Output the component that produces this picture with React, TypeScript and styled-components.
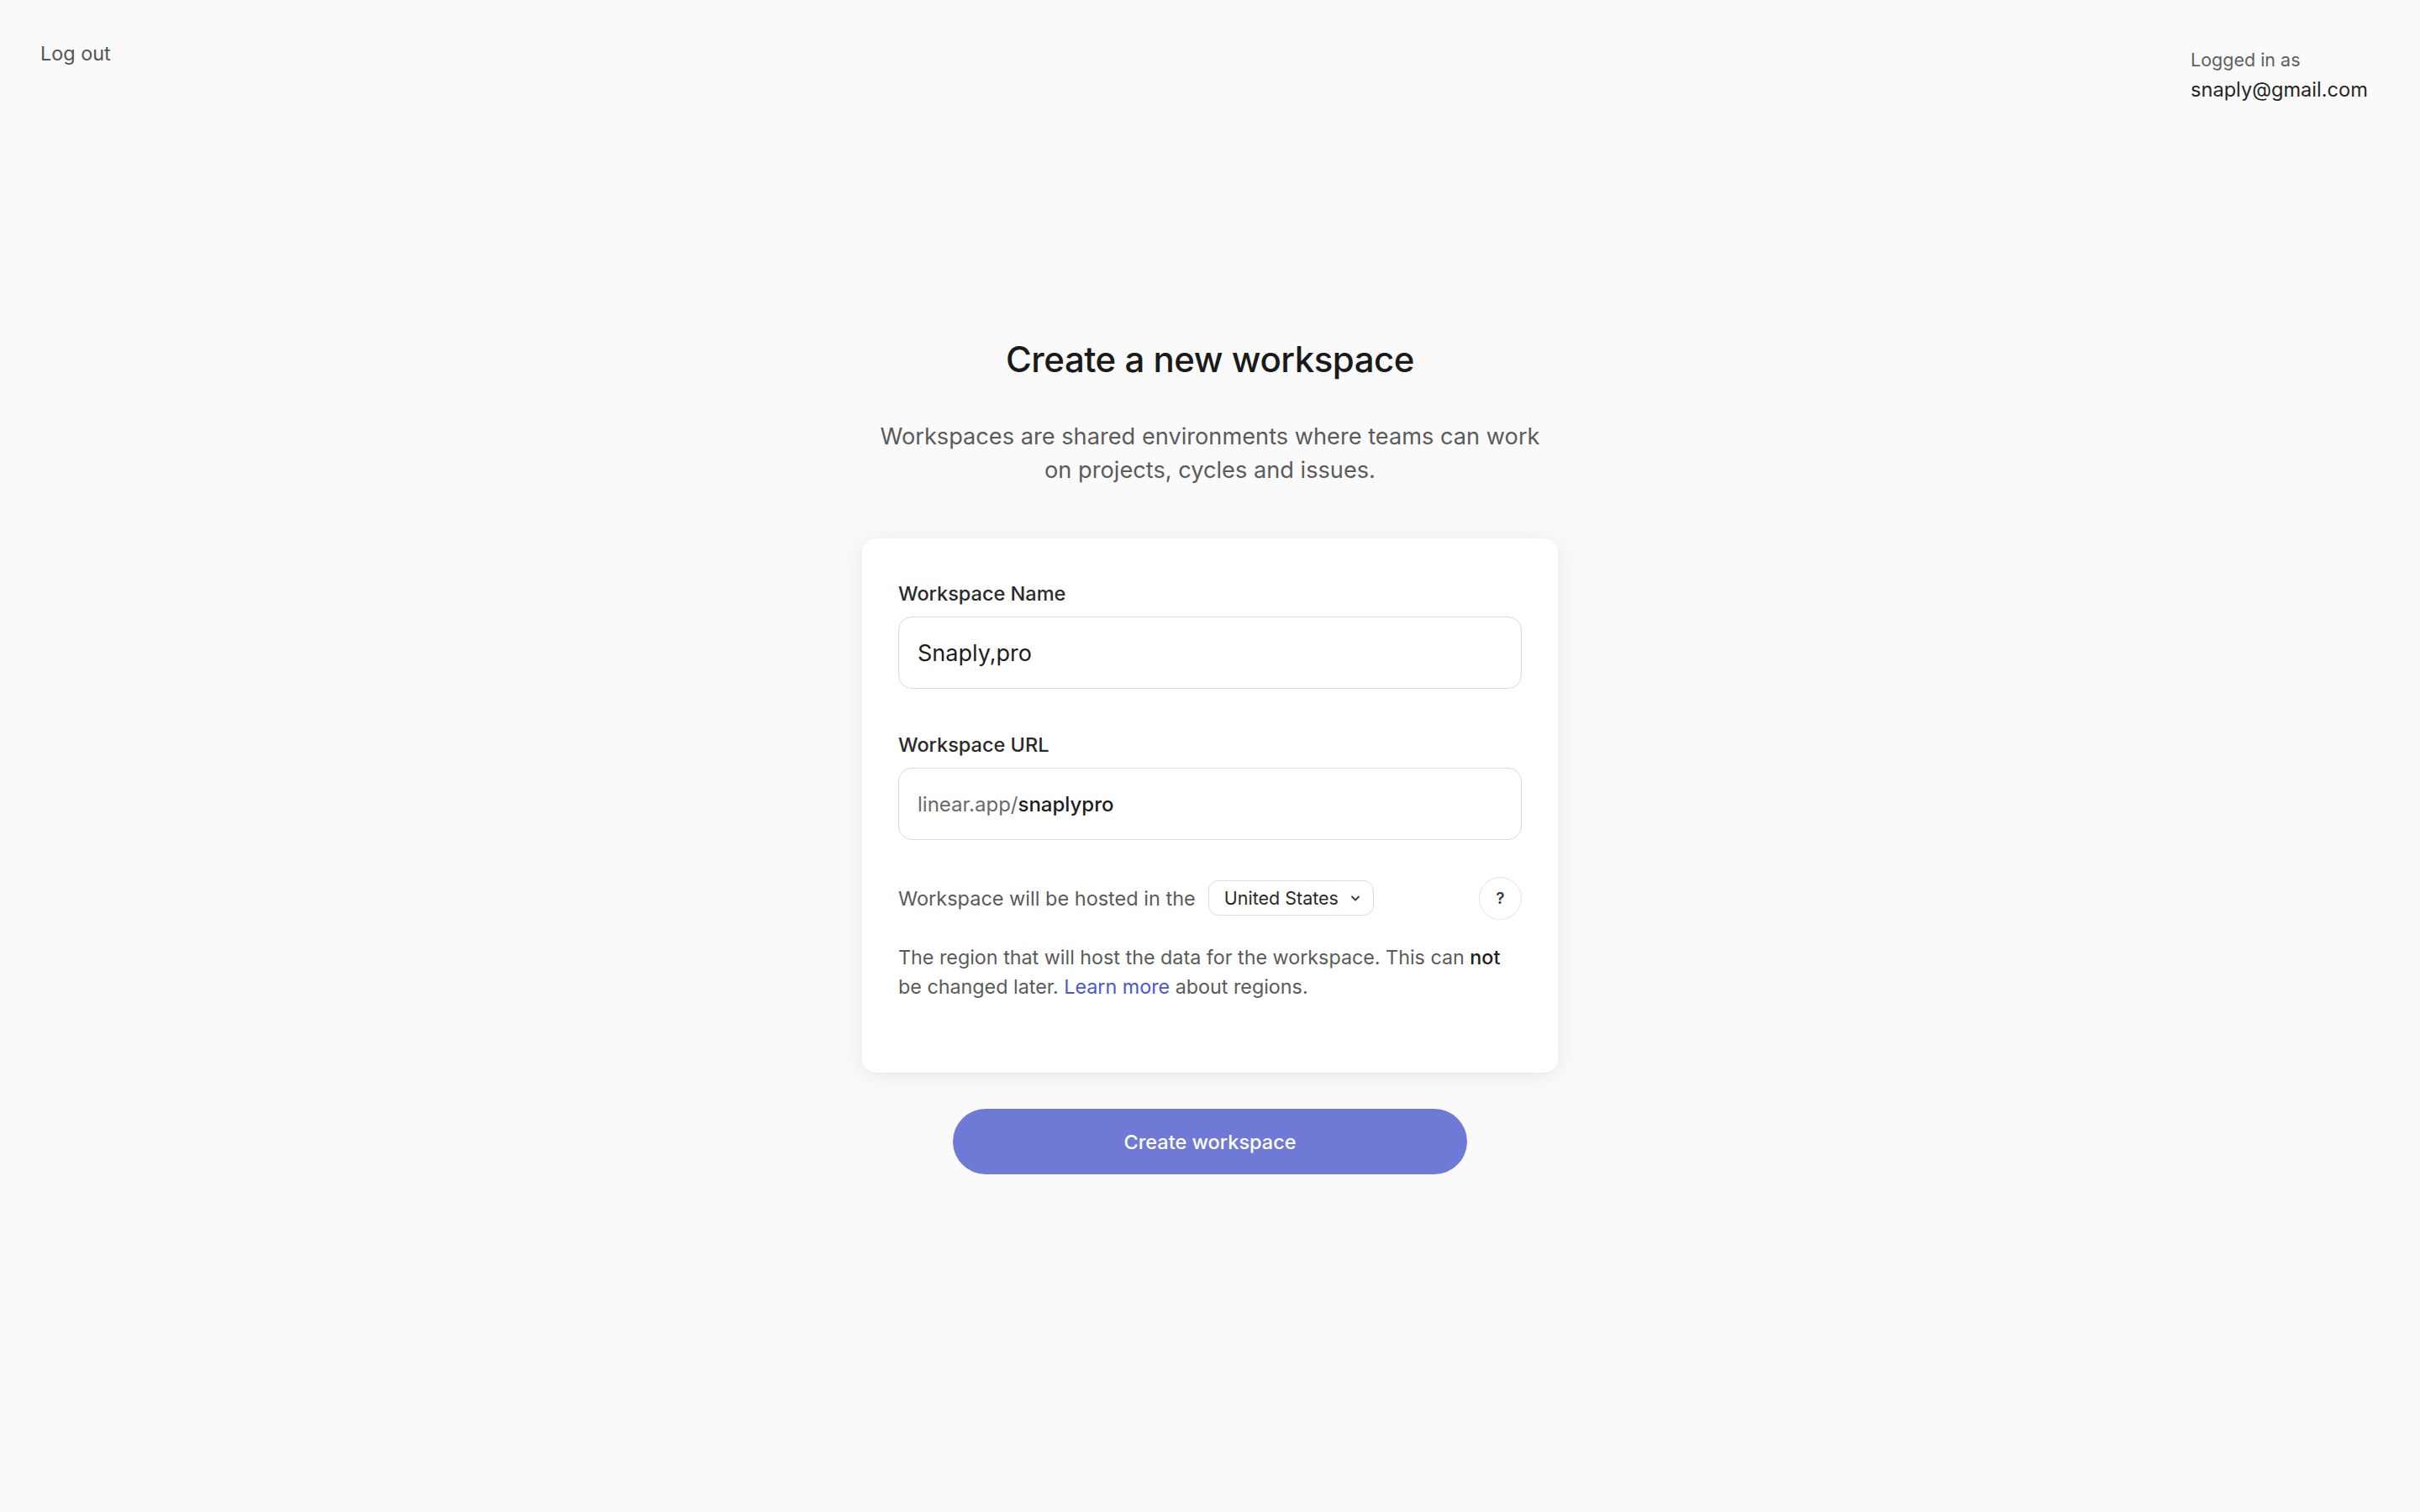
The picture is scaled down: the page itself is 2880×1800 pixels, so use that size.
import React from 'react';
import styled, { createGlobalStyle } from 'styled-components';

const GlobalStyle = createGlobalStyle`
  html, body {
    margin: 0;
    padding: 0;
    background: #fafafa;
    font-family: Inter, "Liberation Sans", sans-serif;
    -webkit-font-smoothing: antialiased;
  }
  * { box-sizing: border-box; }
`;

const Page = styled.div`
  min-height: 1800px;
  background: #fafafa;
  display: flex;
  flex-direction: column;
`;

const TopBar = styled.header`
  display: flex;
  justify-content: space-between;
  align-items: flex-start;
  padding: 46px 62px 0 48px;
`;

const LogOut = styled.a`
  font-size: 23.4px;
  line-height: 36px;
  color: #555;
  cursor: pointer;
`;

const Account = styled.div`
  display: flex;
  flex-direction: column;
  padding-top: 9px;
  width: 211px;
`;

const AccountLabel = styled.span`
  font-size: 21.5px;
  line-height: 32px;
  color: #5f5f5f;
`;

const AccountEmail = styled.span`
  font-size: 23.6px;
  line-height: 40px;
  color: #262626;
  white-space: nowrap;
`;

const Main = styled.main`
  display: flex;
  flex-direction: column;
  align-items: center;
  padding-top: 274px;
`;

const Title = styled.h1`
  margin: 0;
  font-size: 42px;
  line-height: 54px;
  font-weight: 500;
  color: #1a1a1a;
  letter-spacing: -0.5px;
`;

const Subtitle = styled.p`
  margin: 45px 0 0;
  width: 800px;
  text-align: center;
  font-size: 27.2px;
  line-height: 40px;
  color: #5b5b5b;
`;

const Card = styled.div`
  margin-top: 61px;
  width: 828px;
  background: #fff;
  border-radius: 16px;
  box-shadow: 0 4px 28px rgba(0, 0, 0, 0.07), 0 1px 3px rgba(0, 0, 0, 0.04);
  padding: 50px 43px 85px;
  display: flex;
  flex-direction: column;
`;

const Field = styled.div<{ $gap?: number }>`
  display: flex;
  flex-direction: column;
  margin-top: ${(p) => p.$gap ?? 0}px;
`;

const Label = styled.label`
  font-size: 23.5px;
  line-height: 32px;
  font-weight: 500;
  color: #2a2a2a;
  margin-bottom: 11px;
`;

const InputBox = styled.div<{ $size: number }>`
  height: 86px;
  border: 1.5px solid #dcdcdc;
  border-radius: 16px;
  display: flex;
  align-items: center;
  padding: 0 22px;
  font-size: ${(p) => p.$size}px;
  color: #1d1d1d;
`;

const Prefix = styled.span`
  color: #6a6a6a;
`;

const Value = styled.span`
  color: #1d1d1d;
  font-weight: 500;
`;

const HostRow = styled.div`
  margin-top: 44px;
  display: flex;
  align-items: center;
  height: 50px;
`;

const HostText = styled.span`
  font-size: 23.5px;
  color: #5a5a5a;
  margin-right: 15px;
`;

const Select = styled.button`
  display: flex;
  align-items: center;
  gap: 13px;
  height: 42px;
  padding: 0 14px 0 18px;
  border: 1.5px solid #dcdcdc;
  border-radius: 12px;
  background: #fff;
  font-family: inherit;
  font-size: 21.5px;
  color: #2a2a2a;
`;

const Help = styled.button`
  margin-left: auto;
  width: 51px;
  height: 51px;
  border-radius: 50%;
  border: 1.5px solid #e2e2e2;
  background: #fff;
  font-family: inherit;
  font-size: 19px;
  font-weight: 600;
  color: #3a3a3a;
  display: flex;
  align-items: center;
  justify-content: center;
  padding: 0;
`;

const Note = styled.p`
  margin: 28px 0 0;
  font-size: 23.3px;
  line-height: 35px;
  color: #5a5a5a;

  strong {
    font-weight: 500;
    color: #1d1d1d;
  }

  a {
    color: #4758d6;
    text-decoration: none;
  }
`;

const CreateButton = styled.button`
  margin-top: 43px;
  width: 612px;
  height: 78px;
  border: none;
  border-radius: 39px;
  background: #6e7ad5;
  color: #fff;
  font-family: inherit;
  font-size: 23.5px;
  font-weight: 500;
`;

const Chevron = () => (
  <svg width="14" height="14" viewBox="0 0 14 14" fill="none">
    <path d="M3 5.5l4 4 4-4" stroke="#3a3a3a" strokeWidth="1.8" strokeLinecap="round" strokeLinejoin="round" />
  </svg>
);

export default function App() {
  return (
    <Page>
      <GlobalStyle />
      <TopBar>
        <LogOut>Log out</LogOut>
        <Account>
          <AccountLabel>Logged in as</AccountLabel>
          <AccountEmail>snaply@gmail.com</AccountEmail>
        </Account>
      </TopBar>
      <Main>
        <Title>Create a new workspace</Title>
        <Subtitle>
          Workspaces are shared environments where teams can work on projects, cycles and issues.
        </Subtitle>
        <Card>
          <Field>
            <Label>Workspace Name</Label>
            <InputBox $size={27}>Snaply,pro</InputBox>
          </Field>
          <Field $gap={51}>
            <Label>Workspace URL</Label>
            <InputBox $size={24}>
              <Prefix>linear.app/</Prefix>
              <Value>snaplypro</Value>
            </InputBox>
          </Field>
          <HostRow>
            <HostText>Workspace will be hosted in the</HostText>
            <Select>
              United States
              <Chevron />
            </Select>
            <Help>?</Help>
          </HostRow>
          <Note>
            The region that will host the data for the workspace. This can <strong>not</strong> be
            changed later. <a href="#">Learn more</a> about regions.
          </Note>
        </Card>
        <CreateButton>Create workspace</CreateButton>
      </Main>
    </Page>
  );
}
